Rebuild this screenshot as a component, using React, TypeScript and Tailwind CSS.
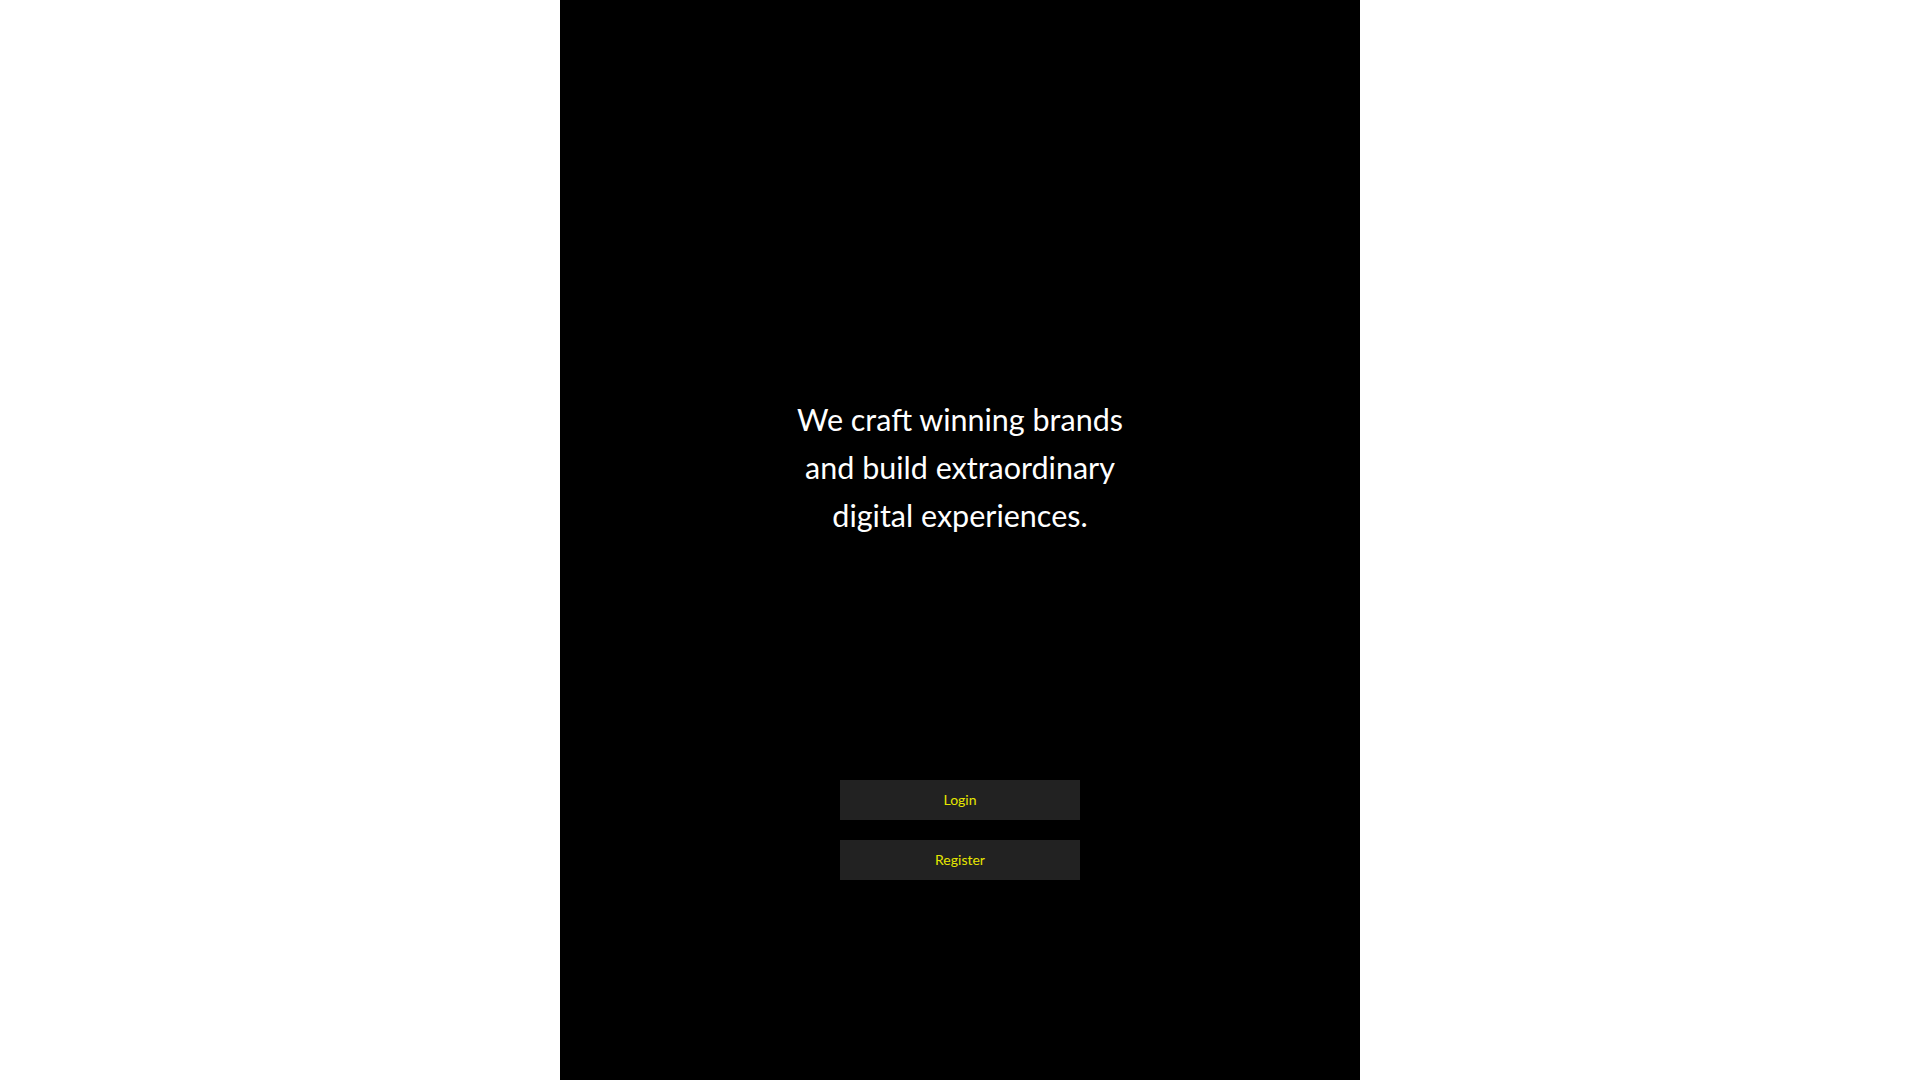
export default function App() {
  return (
    <div className="flex min-h-screen justify-center bg-white">
      <div className="flex h-screen w-[800px] flex-col items-center bg-black pt-[395px] font-['Lato','Noto_Sans',sans-serif]">
        <p className="text-center text-[30.5px] leading-[48px] text-white">
          We craft winning brands
          <br />
          and build extraordinary
          <br />
          digital experiences.
        </p>
        <div className="mt-[241px] flex flex-col gap-5">
          <button className="h-10 w-[240px] bg-[#222222] pb-0.5 text-[14px] text-[#e6e600]">Login</button>
          <button className="h-10 w-[240px] bg-[#222222] pb-0.5 text-[14px] text-[#e6e600]">Register</button>
        </div>
      </div>
    </div>
  )
}
